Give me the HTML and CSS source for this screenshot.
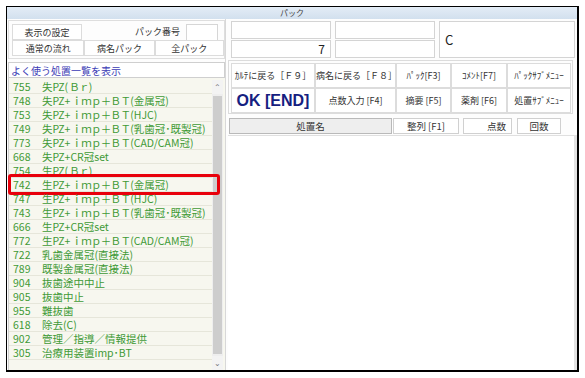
FILE: index.html
```html
<!DOCTYPE html>
<html>

<head>
    <meta charset="utf-8">
    <title>パック</title>
    <link rel="stylesheet" href="styles.css">
</head>

<body>
    <div class="window">
        <div class="titlebar">パック</div>
        <div class="main">
            <div class="left">
                <div class="settings">
                    <div class="srow">
                        <div class="btn w70">表示の設定</div>
                        <div class="label">パック番号</div>
                        <div class="numbox"></div>
                    </div>
                    <div class="srow">
                        <div class="btn b1">通常の流れ</div>
                        <div class="btn b2">病名パック</div>
                        <div class="btn b3">全パック</div>
                    </div>
                </div>
                <div class="listhead">よく使う処置一覧を表示</div>
                <div class="list">
                    <div class="rows">
                        <div class="row"><span class="no">755</span>失PZ(<span class="fw">Ｂｒ</span>)</div>
                        <div class="row"><span class="no">748</span>失PZ+<span class="fw">ｉｍｐ＋ＢＴ</span>(金属冠)</div>
                        <div class="row"><span class="no">753</span>失PZ+<span class="fw">ｉｍｐ＋ＢＴ</span>(HJC)</div>
                        <div class="row"><span class="no">749</span>失PZ+<span class="fw">ｉｍｐ＋ＢＴ</span>(乳歯冠･既製冠)</div>
                        <div class="row"><span class="no">773</span>失PZ+<span class="fw">ｉｍｐ＋ＢＴ</span>(CAD/CAM冠)</div>
                        <div class="row"><span class="no">668</span>失PZ+CR冠set</div>
                        <div class="row"><span class="no">754</span>生PZ(<span class="fw">Ｂｒ</span>)</div>
                        <div class="row marked"><span class="no">742</span>生PZ+<span class="fw">ｉｍｐ＋ＢＴ</span>(金属冠)</div>
                        <div class="row"><span class="no">747</span>生PZ+<span class="fw">ｉｍｐ＋ＢＴ</span>(HJC)</div>
                        <div class="row"><span class="no">743</span>生PZ+<span class="fw">ｉｍｐ＋ＢＴ</span>(乳歯冠･既製冠)</div>
                        <div class="row"><span class="no">666</span>生PZ+CR冠set</div>
                        <div class="row"><span class="no">772</span>生PZ+<span class="fw">ｉｍｐ＋ＢＴ</span>(CAD/CAM冠)</div>
                        <div class="row"><span class="no">722</span>乳歯金属冠(直接法)</div>
                        <div class="row"><span class="no">789</span>既製金属冠(直接法)</div>
                        <div class="row"><span class="no">904</span>抜歯途中中止</div>
                        <div class="row"><span class="no">905</span>抜歯中止</div>
                        <div class="row"><span class="no">955</span>難抜歯</div>
                        <div class="row"><span class="no">618</span>除去(C)</div>
                        <div class="row"><span class="no">902</span>管理／指導／情報提供</div>
                        <div class="row"><span class="no">305</span>治療用装置imp･BT</div>
                    </div>
                    <div class="scroll">
                        <div class="arrow">&#8963;</div>
                        <div class="thumb"></div>
                        <div class="arrow">&#8964;</div>
                    </div>
                </div>
            </div>

            <div class="right">
                <div class="fields">
                    <div class="fcol">
                        <div class="field"></div>
                        <div class="field num">7</div>
                    </div>
                    <div class="fcol">
                        <div class="field"></div>
                        <div class="field"></div>
                    </div>
                    <div class="field big">C</div>
                </div>
                <div class="buttons">
                    <div class="brow">
                        <div class="btn c1">ｶﾙﾃに戻る［Ｆ９］</div>
                        <div class="btn c2">病名に戻る［Ｆ８］</div>
                        <div class="btn c3">ﾊﾟｯｸ[F3]</div>
                        <div class="btn c4">ｺﾒﾝﾄ[F7]</div>
                        <div class="btn c5">ﾊﾟｯｸｻﾌﾞﾒﾆｭｰ</div>
                    </div>
                    <div class="brow">
                        <div class="btn c1 ok">OK [END]</div>
                        <div class="btn c2">点数入力 [F4]</div>
                        <div class="btn c3">摘要 [F5]</div>
                        <div class="btn c4">薬剤 [F6]</div>
                        <div class="btn c5">処置ｻﾌﾞﾒﾆｭｰ</div>
                    </div>
                </div>
                <div class="colhead">
                    <div class="hname">処置名</div>
                    <div class="hsort">整列 [F1]</div>
                    <div class="hpts">点数</div>
                    <div class="hcnt">回数</div>
                </div>
                <div class="content"></div>
            </div>
        </div>
    </div>
</body>

</html>
```

FILE: styles.css
```css
body {
    margin: 0;
    background-color: #ffffff;
    font-family: "Noto Sans CJK JP", "Noto Sans", sans-serif;
    color: #333333;
}

.window {
    margin: 6px 0 0 6px;
    width: 570px;
    height: 363px;
    border: 1px solid #000000;
    border-right-width: 2px;
    border-bottom-width: 2px;
    display: flex;
    flex-direction: column;
    background-color: #fdfdfd;
}

.titlebar {
    height: 12px;
    line-height: 12px;
    font-size: 8px;
    text-align: center;
    color: #444444;
    background: linear-gradient(#e3ecf6, #d2e0ee);
}

.main {
    flex: 1;
    display: flex;
    min-height: 0;
}

.btn {
    height: 16px;
    line-height: 15px;
    font-size: 9px;
    text-align: center;
    color: #333333;
    background-color: #ffffff;
    border: 1px solid #dcdcdc;
    box-sizing: border-box;
    white-space: nowrap;
}

/* left side */
.left {
    width: 217px;
    margin-left: 1px;
    display: flex;
    flex-direction: column;
    border-right: 1px solid #d8d8d8;
}

.settings {
    margin-top: 1px;
    height: 39px;
    border: 1px solid #dedede;
    box-sizing: border-box;
    padding: 3px 0 0 3px;
}

.srow {
    display: flex;
    align-items: flex-start;
}

.w70 {
    width: 70px;
}

.label {
    width: 104px;
    text-align: right;
    font-size: 9px;
    line-height: 15px;
    padding-right: 6px;
    box-sizing: border-box;
}

.numbox {
    width: 32px;
    height: 18px;
    border: 1px solid #d6d6d6;
    box-sizing: border-box;
    background-color: #ffffff;
}

.srow .b1 {
    width: 73px;
    margin-top: -2px;
}

.srow .b2 {
    width: 71px;
    margin-top: -2px;
}

.srow .b3 {
    width: 70px;
    margin-top: -2px;
}

.listhead {
    margin-top: 3px;
    height: 16px;
    line-height: 15px;
    font-size: 10px;
    color: #3b3bb5;
    background-color: #ffffff;
    border: 1px solid #cfcfcf;
    box-sizing: border-box;
    padding-left: 2px;
}

.list {
    flex: 1;
    display: flex;
    background-color: #f7f7ef;
    border-left: 1px solid #cfcfcf;
    padding-top: 2px;
}

.rows {
    flex: 1;
}

.row {
    height: 14px;
    line-height: 13px;
    font-size: 10.5px;
    color: #3f9a36;
    border-bottom: 1px solid #e6e6da;
    box-sizing: border-box;
    padding-left: 4px;
    white-space: nowrap;
    position: relative;
}

.row .no {
    display: inline-block;
    width: 29px;
}

.row .fw {
    letter-spacing: -0.7px;
    margin-left: 1px;
}

.row.marked::after {
    content: "";
    position: absolute;
    left: -1px;
    top: -4px;
    width: 212px;
    height: 21px;
    border: 3px solid #e8000b;
    border-radius: 3px;
    box-sizing: border-box;
}

.scroll {
    width: 11px;
    margin-right: 2px;
    display: flex;
    flex-direction: column;
    background-color: #eeeeee;
}

.arrow {
    height: 14px;
    font-size: 8px;
    line-height: 14px;
    text-align: center;
    color: #777777;
    background-color: #f3f3f3;
}

.thumb {
    flex: 1;
    margin: 2px 1px;
    background-color: #cdcdcd;
}

/* right side */
.right {
    flex: 1;
    display: flex;
    flex-direction: column;
    padding-left: 2px;
}

.fields {
    display: flex;
    gap: 4px;
    padding: 2px 0 0 3px;
    height: 39px;
    box-sizing: border-box;
}

.fcol {
    display: flex;
    flex-direction: column;
    gap: 1px;
}

.field {
    width: 100px;
    height: 18px;
    border: 1px solid #d4d4d4;
    box-sizing: border-box;
    background-color: #ffffff;
    font-size: 12px;
    line-height: 16px;
    color: #222222;
}

.field.num {
    text-align: right;
    padding-right: 5px;
}

.field.big {
    width: 136px;
    height: 37px;
    line-height: 35px;
    font-size: 13px;
    padding-left: 5px;
}

.buttons {
    margin-top: 2px;
    width: 345px;
    height: 54px;
    border: 1px solid #dcdcdc;
    box-sizing: border-box;
    padding: 2px 0 0 2px;
}

.brow {
    display: flex;
}

.brow .btn {
    height: 25px;
    line-height: 23px;
    font-size: 9px;
}

.c1 { width: 84px; }
.c2 { width: 81px; }
.c3 { width: 55px; }
.c4 { width: 56px; }
.c5 { width: 64px; }

.brow .ok {
    font-size: 16px;
    font-weight: bold;
    color: #152080;
    font-family: "Liberation Sans", sans-serif;
}

.colhead {
    margin-top: 3px;
    display: flex;
    align-items: center;
    height: 17px;
    font-size: 9.5px;
}

.colhead div {
    height: 16px;
    line-height: 15px;
    border: 1px solid #d0d0d0;
    box-sizing: border-box;
    background-color: #ffffff;
}

.hname {
    width: 163px;
    margin-left: 1px;
    text-align: center;
    background-color: #eeeeee !important;
    border-color: #b9b9b9 !important;
}

.hsort {
    width: 66px;
    margin-left: 1px;
    text-align: center;
}

.hpts {
    width: 49px;
    margin-left: 4px;
    text-align: right;
    padding-right: 5px;
}

.hcnt {
    width: 44px;
    margin-left: 5px;
    text-align: center;
}

.content {
    flex: 1;
    margin-top: 1px;
    background-color: #ffffff;
    border-top: 1px solid #e0e0e0;
    border-right: 3px solid #e2e2e2;
}
```
